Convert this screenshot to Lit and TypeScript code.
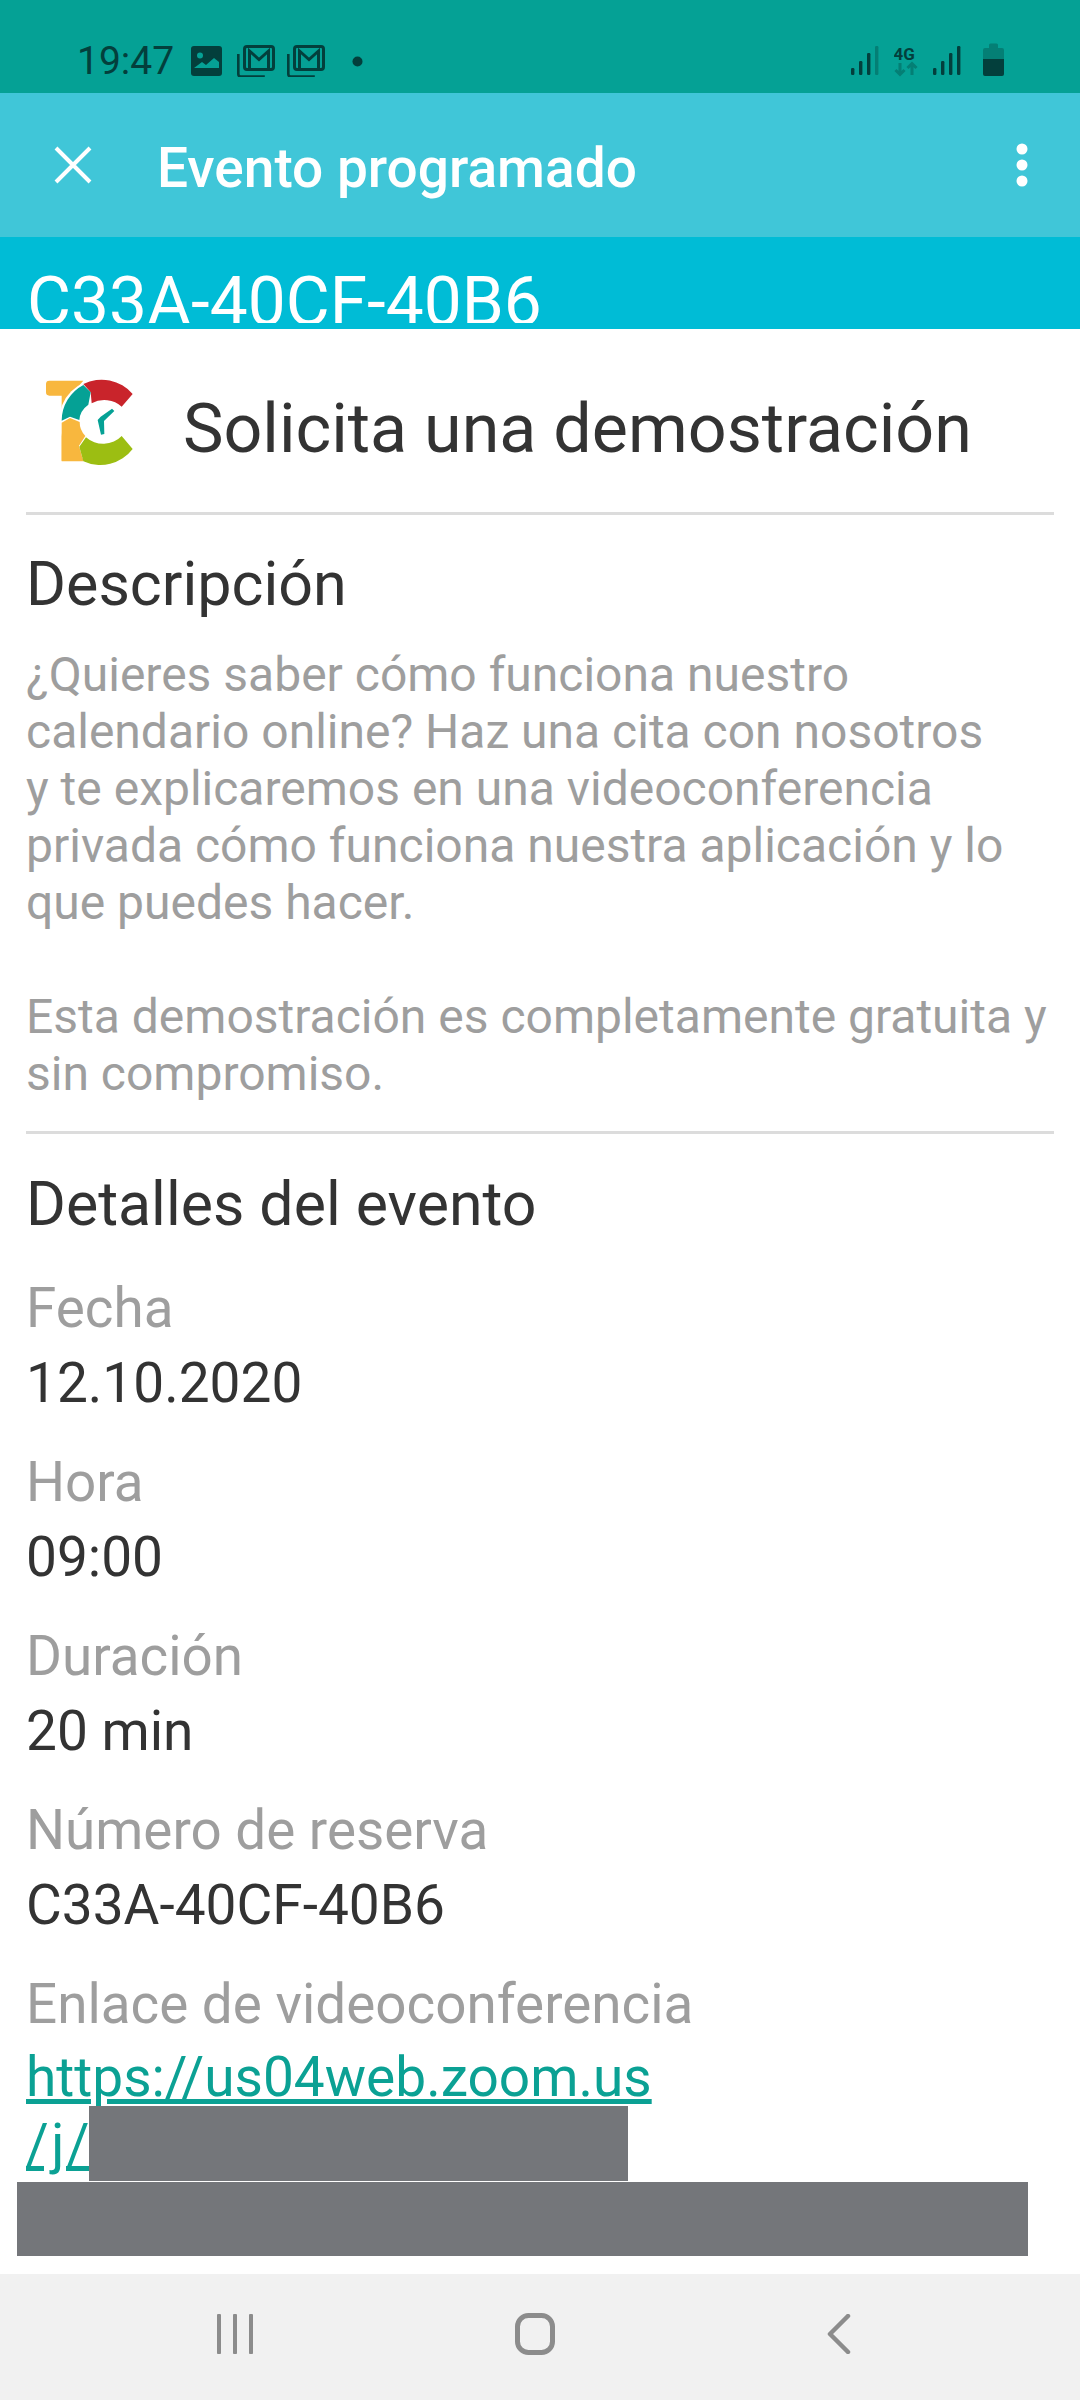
import { LitElement, html, css, svg } from 'lit';
import { customElement } from 'lit/decorators.js';

const details = [
  { label: 'Fecha', value: '12.10.2020' },
  { label: 'Hora', value: '09:00' },
  { label: 'Duración', value: '20 min' },
  { label: 'Número de reserva', value: 'C33A-40CF-40B6' },
];

const mailIcon = svg`
  <path d="M1.300 9v20q0 2.500 2.500 2.500h24" fill="none" stroke="currentColor" stroke-width="2.600"/>
  <rect x="7.500" y="1.500" width="29" height="23" rx="2.500" fill="none" stroke="currentColor" stroke-width="3"/>
  <path d="M12.500 23V6l9.500 8.500L31.500 6v17" fill="none" stroke="currentColor" stroke-width="3"/>
`;

const signalIcon = (lastDim: boolean) => svg`
  <rect x="0" y="22" width="3.400" height="7" rx="1.200" fill="currentColor"/>
  <rect x="8" y="15" width="3.400" height="14" rx="1.200" fill="currentColor"/>
  <rect x="16" y="7" width="3.400" height="22" rx="1.200" fill="currentColor"/>
  <rect x="24" y="0" width="3.400" height="29" rx="1.200" fill=${lastDim ? '#047f75' : 'currentColor'}/>
`;

@customElement('app-root')
export class AppRoot extends LitElement {
  static styles = css`
    :host {
      display: block;
      width: 1080px;
      height: 2400px;
      font-family: Roboto, sans-serif;
      background: #fff;
      position: relative;
      overflow: hidden;
    }
    .page {
      display: flex;
      flex-direction: column;
      height: 2400px;
    }
    .status {
      height: 93px;
      flex: none;
      box-sizing: border-box;
      padding: 43px 76px 0 77px;
      background: #05a195;
      color: #033f3c;
      display: flex;
      justify-content: space-between;
    }
    .status-left,
    .status-right {
      display: flex;
      align-items: flex-start;
    }
    .time {
      font-size: 39px;
      line-height: 39px;
      width: 114px;
      margin-top: -1px;
    }
    .status svg {
      display: block;
      flex: none;
    }
    .image-icon {
      margin-top: 3px;
    }
    .mail-icon {
      margin: 2px 0 0 15px;
    }
    .mail-icon + .mail-icon {
      margin-left: 12px;
    }
    .dot-icon {
      margin: 13px 0 0 27px;
    }
    .signal-icon {
      margin-top: 3px;
    }
    .net-icon {
      margin: 2px 15px 0;
    }
    .battery-icon {
      margin-left: 22px;
    }
    .toolbar {
      height: 144px;
      flex: none;
      background: #40c6d8;
      color: #fff;
      display: flex;
      align-items: center;
      padding: 0 52px 0 54px;
    }
    .toolbar h1 {
      margin: 6px 0 0 65px;
      font-size: 55px;
      font-weight: 500;
      flex: 1;
    }
    .subheader {
      height: 92px;
      flex: none;
      box-sizing: border-box;
      padding-bottom: 6px;
      background: #00bcd6;
    }
    .code {
      height: 86px;
      overflow: hidden;
      padding-left: 27px;
      color: #fff;
      font-size: 67.6px;
      line-height: 86px;
      white-space: nowrap;
    }
    .code span {
      display: block;
      padding-top: 22px;
    }
    .content {
      flex: 1;
      padding: 0 26px;
      min-height: 0;
    }
    .event {
      display: flex;
      align-items: center;
      height: 186px;
      padding-left: 19px;
      border-bottom: 3px solid #dcdcdc;
      box-sizing: border-box;
      gap: 48px;
    }
    .event svg {
      margin-top: 6px;
    }
    .event span {
      font-size: 68.2px;
      color: #333;
      margin-top: 16px;
    }
    h2 {
      margin: 0;
      font-size: 61px;
      font-weight: 400;
      color: #333;
    }
    .desc {
      padding: 35px 0 29px;
      border-bottom: 3px solid #dcdcdc;
    }
    .desc p {
      margin: 0;
      font-size: 48px;
      line-height: 57px;
      color: #9e9e9e;
    }
    .desc p + p {
      margin-top: 57px;
    }
    .desc h2 {
      margin-bottom: 28px;
      line-height: 68px;
    }
    .details {
      padding-top: 38px;
    }
    .details h2 {
      font-size: 60.8px;
      line-height: 66px;
      margin-bottom: 33px;
    }
    .row {
      margin-bottom: 25px;
    }
    .label {
      font-size: 54.8px;
      line-height: 74px;
      color: #9e9e9e;
    }
    .value {
      font-size: 55px;
      line-height: 74px;
      color: #333;
      margin-top: 1px;
    }
    a {
      font-size: 55px;
      line-height: 67px;
      color: #0ba194;
      display: block;
      width: 660px;
      margin-top: 3px;
    }
    .slug {
      letter-spacing: 2.5px;
    }
    .redact {
      position: absolute;
      background: #74767a;
    }
    .redact.one {
      left: 89px;
      top: 2106px;
      width: 539px;
      height: 75px;
    }
    .redact.two {
      left: 17px;
      top: 2182px;
      width: 1011px;
      height: 74px;
    }
    .nav {
      height: 126px;
      flex: none;
      box-sizing: border-box;
      background: #f1f1f1;
      color: #8c8c8c;
      display: flex;
      justify-content: space-between;
      align-items: center;
      padding: 0 229px 6px 217px;
    }
    .nav svg {
      display: block;
    }
    .home-icon {
      margin-right: 10px;
    }
  `;

  render() {
    return html`
      <div class="page">
        <div class="status">
          <div class="status-left">
            <span class="time">19:47</span>
            <svg class="image-icon" width="31" height="30" viewBox="0 0 31 30">
              <rect width="31" height="30" rx="3" fill="currentColor"/>
              <circle cx="9" cy="9.500" r="3" fill="#05a195"/>
              <path d="M3 22l8-6 4 3 8-7 5 4v6z" fill="#05a195"/>
            </svg>
            <svg class="mail-icon" width="38" height="32" viewBox="0 0 38 32">${mailIcon}</svg>
            <svg class="mail-icon" width="38" height="32" viewBox="0 0 38 32">${mailIcon}</svg>
            <svg class="dot-icon" width="11" height="11" viewBox="0 0 11 11">
              <circle cx="5.500" cy="5.500" r="5" fill="currentColor"/>
            </svg>
          </div>
          <div class="status-right">
            <svg class="signal-icon" width="28" height="29" viewBox="0 0 28 29">${signalIcon(true)}</svg>
            <svg class="net-icon" width="24" height="32" viewBox="0 0 24 32">
              <text x="-0.500" y="15" font-size="17" font-weight="700" font-family="Roboto" fill="currentColor">4G</text>
              <path d="M6 18v12M1.500 25l4.500 4.500 4.500-4.500M18 30V19M13.500 23l4.500-4.500 4.500 4.500" fill="none" stroke="#047f75" stroke-width="3"/>
            </svg>
            <svg class="signal-icon" width="28" height="29" viewBox="0 0 28 29">${signalIcon(false)}</svg>
            <svg class="battery-icon" width="21" height="33" viewBox="0 0 21 33">
              <path d="M6 5V2q0-1.500 1.500-1.500h6Q15 .5 15 2v3h4q2 0 2 2v9H0V7q0-2 2-2z" fill="#047f75"/>
              <path d="M0 16h21v15q0 2-2 2H2q-2 0-2-2z" fill="currentColor"/>
            </svg>
          </div>
        </div>

        <div class="toolbar">
          <svg width="38" height="38" viewBox="0 0 38 38">
            <path d="M2 2l34 34M36 2L2 36" stroke="#fff" stroke-width="4" fill="none"/>
          </svg>
          <h1>Evento programado</h1>
          <svg width="12" height="44" viewBox="0 0 12 44">
            <circle cx="6" cy="6" r="5.500" fill="#fff"/>
            <circle cx="6" cy="22" r="5.500" fill="#fff"/>
            <circle cx="6" cy="38" r="5.500" fill="#fff"/>
          </svg>
        </div>

        <div class="subheader">
          <div class="code"><span>C33A-40CF-40B6</span></div>
        </div>

        <div class="content">
          <div class="event">
            <svg width="90" height="90" viewBox="75 85 270 270">
              <path d="M78 100q0-10 10-10h102l-40 45h40v195h-65V135H88q-10 0-10-10z" fill="#f8b73e"/>
              <circle cx="243" cy="211" r="126" fill="#fff"/>
              <path d="M190 100A122 122 0 0 1 338 130L305 168A72 64 0 0 0 215 158L212 125z" fill="#c9242b"/>
              <path d="M125 210A122 122 0 0 1 190 103L212 125L205 162A72 64 0 0 0 178 208L150 198z" fill="#05a195"/>
              <path d="M125 216L150 202L179 214A72 64 0 0 0 196 256L177 285L190 332H125z" fill="#f8b73e"/>
              <path d="M178 288L198 260A72 64 0 0 0 305 256L338 295A122 122 0 0 1 190 332z" fill="#9cbe12"/>
              <path d="M276 174L283 181L252 211L253 250L243 252L233 208L242 198z" fill="#05a195"/>
            </svg>
            <span>Solicita una demostración</span>
          </div>

          <div class="desc">
            <h2>Descripción</h2>
            <p>¿Quieres saber cómo funciona nuestro<br>calendario online? Haz una cita con nosotros<br>y te explicaremos en una videoconferencia<br>privada cómo funciona nuestra aplicación y lo<br>que puedes hacer.</p>
            <p>Esta demostración es completamente gratuita y<br>sin compromiso.</p>
          </div>

          <div class="details">
            <h2>Detalles del evento</h2>
            ${details.map(
              (d) => html`
                <div class="row">
                  <div class="label">${d.label}</div>
                  <div class="value">${d.value}</div>
                </div>
              `
            )}
            <div class="label">Enlace de videoconferencia</div>
            <a href="#">https://us04web.zoom.us<br><span class="slug">/j/</span>000000000000</a>
          </div>
        </div>

        <div class="nav">
          <svg width="36" height="40" viewBox="0 0 36 40">
            <path d="M2 1.500v37M18 1.500v37M34 1.500v37" stroke="currentColor" stroke-width="4" stroke-linecap="round" fill="none"/>
          </svg>
          <svg class="home-icon" width="40" height="42" viewBox="0 0 40 42">
            <rect x="2.500" y="2.500" width="35" height="37" rx="11" fill="none" stroke="currentColor" stroke-width="5"/>
          </svg>
          <svg width="24" height="40" viewBox="0 0 24 40">
            <path d="M21 2L3 20l18 18" stroke="currentColor" stroke-width="4.500" stroke-linecap="round" stroke-linejoin="round" fill="none"/>
          </svg>
        </div>
      </div>
      <div class="redact one"></div>
      <div class="redact two"></div>
    `;
  }
}
